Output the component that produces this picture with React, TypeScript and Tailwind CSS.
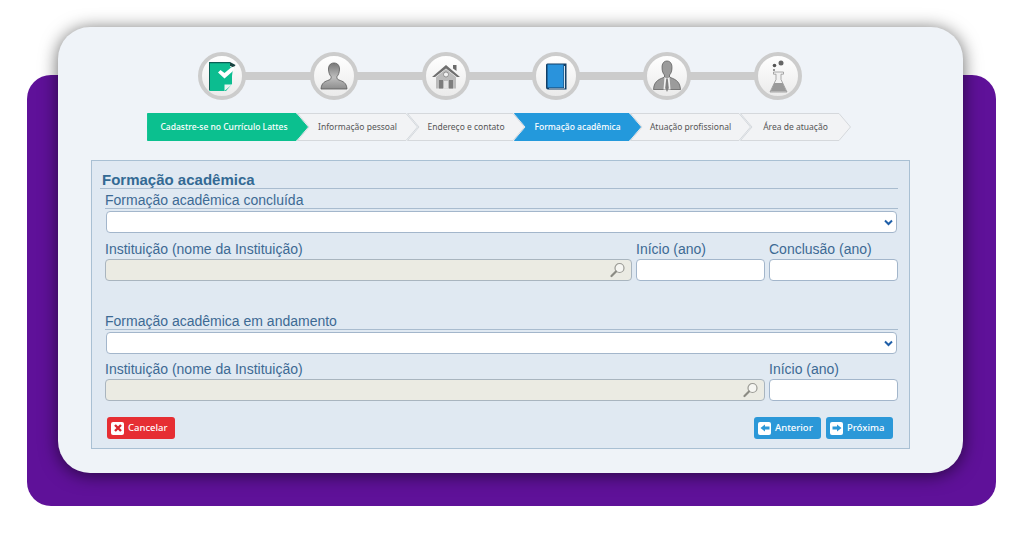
import { ReactNode } from 'react'

function DocIcon() {
  return (
    <svg width="29" height="31" viewBox="0 0 29 31">
      <path d="M1 2a1 1 0 0 1 1-1h20v5l3 1-1 8v8l-6 7H2a1 1 0 0 1-1-1z" fill="#0cbd90" />
      <path d="M1 1h21v1.200H2V29H1z" fill="#0a5f55" />
      <path d="M22 1v4l4 1.500 1.500-2.500z" fill="#16433f" />
      <path d="M10 11.500l2.500-2.500 4 3 6-5 4.500-2-2.500 5.500-8 7z" fill="#fff" />
      <path d="M16.500 30v-6.500H24z" fill="#eef3f1" />
    </svg>
  )
}

function PersonIcon() {
  return (
    <svg width="28" height="28" viewBox="0 0 28 28">
      <defs>
        <linearGradient id="pg" x1="0" y1="0" x2="0" y2="1">
          <stop offset="0" stopColor="#777" />
          <stop offset="0.55" stopColor="#bdbdbd" />
          <stop offset="1" stopColor="#8d8d8d" />
        </linearGradient>
      </defs>
      <path d="M14 1c4 0 5.500 3 5.500 6 0 3-1 6-2.500 7.500-.5 2 .5 3 2 3.500 4 1.500 7.500 2.500 8 9H1c.5-6.500 4-7.500 8-9 1.500-.5 2.500-1.500 2-3.500C9.500 13 8.500 10 8.500 7c0-3 1.500-6 5.500-6z" fill="url(#pg)" stroke="#5a5a5a" strokeWidth=".8" />
    </svg>
  )
}

function HouseIcon() {
  return (
    <svg width="28" height="25" viewBox="0 0 28 25">
      <path d="M21 1h3.500v6L21 4.500z" fill="#6a6a6a" />
      <path d="M14 1L0 13h3l11-8.500L25 13h3z" fill="#6f6f6f" />
      <path d="M4 13L14 5l10 8v11.500H4z" fill="#bcbcbc" />
      <circle cx="14" cy="10.500" r="2.500" fill="#f2f2f2" stroke="#777" strokeWidth=".7" />
      <path d="M7 16h4v8.500H7zM17 16h4v8.500h-4z" fill="#7d7d7d" />
      <path d="M12 17h4v7.500h-4z" fill="#e4e4e4" />
    </svg>
  )
}

function BookIcon() {
  return (
    <svg width="21" height="27" viewBox="0 0 21 27">
      <path d="M0 2a1.500 1.500 0 0 1 1.500-1.500H20.500V26.500H2a2 2 0 0 1-2-2z" fill="#123f66" />
      <path d="M1.500 1.500H17.500V24.500H1.500z" fill="#2a93dc" />
      <path d="M18 3h1v22.500H3V25h15z" fill="#d8e6f0" />
    </svg>
  )
}

function ManTieIcon() {
  return (
    <svg width="28" height="33" viewBox="0 0 28 33">
      <path d="M14 1c3.500 0 5 3 5 6.500S18 13.500 16.500 15v2c4 2 10.500 3 11 12.500h-27C1 20 7.500 19 11.500 17v-2C10 13.500 9 11 9 7.500S10.500 1 14 1z" fill="#9b9b9b" stroke="#555" strokeWidth=".7" />
      <path d="M11.500 17l2.500 2 2.500-2 1 12.500h-7z" fill="#f0f0f0" />
      <path d="M13.200 19h1.600l1 9-1.800 4-1.800-4z" fill="#808080" />
    </svg>
  )
}

function FlaskIcon() {
  return (
    <svg width="19" height="33" viewBox="0 0 19 33">
      <circle cx="12" cy="3" r="2.500" fill="#666" />
      <circle cx="5.500" cy="5.500" r="1.800" fill="#555" />
      <circle cx="5" cy="10" r="1" fill="#777" />
      <path d="M4.500 12h10v2.200h-2.500v5.300l6 12.500H1l6-12.500v-5.300H4.500z" fill="#f1f1f1" stroke="#8a8a8a" strokeWidth=".7" />
      <path d="M5.300 23h8.400l3.800 8.500h-16z" fill="#9a9a9a" />
    </svg>
  )
}

function Circle({ children }: { children: ReactNode }) {
  return (
    <div className="relative z-10 flex h-[48px] w-[48px] shrink-0 items-center justify-center rounded-full border-[4px] border-[#cccccc] bg-gradient-to-b from-[#ffffff] to-[#ebebeb]">
      {children}
    </div>
  )
}

function Bar({ width }: { width: string }) {
  return <div className={`-mx-[1px] h-[8px] bg-[#cccccc] ${width}`} />
}

const STEPS = [
  { label: 'Cadastre-se no Currículo Lattes', width: 161, fill: '#0bc08f', first: true },
  { label: 'Informação pessoal', width: 121, fill: '' },
  { label: 'Endereço e contato', width: 118, fill: '' },
  { label: 'Formação acadêmica', width: 127, fill: '#2399dc' },
  { label: 'Atuação profissional', width: 121, fill: '' },
  { label: 'Área de atuação', width: 111, fill: '' },
]

function Step({ label, width, fill, first }: { label: string; width: number; fill: string; first?: boolean }) {
  const h = 28
  const tip = 12
  const notch = first ? 0 : tip
  const points = `0.5,0.5 ${width - tip},0.5 ${width - 0.5},${h / 2} ${width - tip},${h - 0.5} 0.5,${h - 0.5} ${notch},${h / 2}`
  return (
    <div
      className={`relative flex h-[28px] shrink-0 items-center justify-center ${first ? 'pr-[7px]' : '-ml-[11px] px-[12px]'} ${fill ? 'z-10' : ''}`}
      style={{ width }}
    >
      <svg className="absolute inset-0" width={width} height={h}>
        <polygon
          points={points}
          fill={fill || '#f2f3f5'}
          stroke={fill || '#d5d8dc'}
          strokeWidth="1"
        />
      </svg>
      <span className={`relative whitespace-nowrap text-[8.5px] ${fill ? 'font-medium text-white' : 'text-[#555]'}`}>{label}</span>
    </div>
  )
}

function Chevron() {
  return (
    <svg className="pointer-events-none absolute right-[4px] top-[8px]" width="9" height="7" viewBox="0 0 9 7">
      <path d="M1 1.500l3.500 3.500 3.500-3.500" fill="none" stroke="#1f5fa8" strokeWidth="2" />
    </svg>
  )
}

function Lens() {
  return (
    <svg className="absolute right-[6px] top-[3px]" width="16" height="16" viewBox="0 0 16 16">
      <circle cx="9.500" cy="6" r="4.500" fill="#f6f6f2" stroke="#9a9a94" strokeWidth="1.200" />
      <path d="M6 9.500L1.500 14" stroke="#8b8b83" strokeWidth="2.200" strokeLinecap="round" />
    </svg>
  )
}

function Label({ children }: { children: ReactNode }) {
  return <label className="block h-[18px] text-[14px] leading-[16px] text-[#3d6a94]">{children}</label>
}

function SectionLabel({ children }: { children: ReactNode }) {
  return (
    <div className="border-b border-[#a9bccf] pb-[1px]">
      <label className="block h-[18px] text-[14px] leading-[22px] text-[#3d6a94]">{children}</label>
    </div>
  )
}

function SelectBox() {
  return (
    <div className="relative ml-[1px] mr-[1px] mt-[2px]">
      <select className="block h-[22px] w-full appearance-none rounded-[4px] border border-[#a3b6cb] bg-white" />
      <Chevron />
    </div>
  )
}

function TextBox() {
  return <input className="block h-[22px] w-full rounded-[4px] border border-[#a3b6cb] bg-white" />
}

function LookupBox() {
  return (
    <div className="relative">
      <input readOnly className="block h-[22px] w-full rounded-[4px] border border-[#a9b5bf] bg-[#ebebe3]" />
      <Lens />
    </div>
  )
}

function ActionButton({ color, width, label, icon }: { color: string; width: string; label: string; icon: ReactNode }) {
  return (
    <button className={`flex h-[22px] items-center gap-[4px] rounded-[3px] pl-[4px] text-[9.5px] font-medium text-white [font-family:"Noto_Sans",sans-serif] ${color} ${width}`}>
      <span className="flex h-[13px] w-[13px] items-center justify-center rounded-[2px] bg-white">{icon}</span>
      {label}
    </button>
  )
}

export default function App() {
  return (
    <div className='relative h-[536px] w-[1024px] overflow-hidden bg-white pt-[27px] pl-[58px] [font-family:"Noto_Sans",sans-serif]'>
      {/* purple block behind the card */}
      <div className="absolute left-[27px] top-[75px] h-[431px] w-[969px] rounded-[24px] bg-[#5f1199]" />

      <div className="relative h-[446px] w-[905px] rounded-[32px] bg-[#eff3f8] pt-[25px] shadow-[0_2px_18px_rgba(0,0,0,0.6)]">
        {/* stepper icons */}
        <div className="ml-[140px] flex items-center">
          <Circle><DocIcon /></Circle>
          <Bar width="w-[66px]" />
          <Circle><PersonIcon /></Circle>
          <Bar width="w-[66px]" />
          <Circle><HouseIcon /></Circle>
          <Bar width="w-[64px]" />
          <Circle><BookIcon /></Circle>
          <Bar width="w-[65px]" />
          <Circle><ManTieIcon /></Circle>
          <Bar width="w-[65px]" />
          <Circle><FlaskIcon /></Circle>
        </div>

        {/* breadcrumb */}
        <div className="ml-[89px] mt-[13px] flex">
          {STEPS.map(s => (
            <Step key={s.label} {...s} />
          ))}
        </div>

        {/* form panel */}
        <div className='ml-[33px] mt-[19px] h-[289px] w-[819px] border border-[#a9c0d3] bg-[#e0e9f2] pl-[8px] pr-[11px] [font-family:"Liberation_Sans",sans-serif]'>
          <h2 className="mt-[10px] h-[18px] border-b border-[#a9bccf] pl-[2px] text-[15px] font-bold leading-[18px] text-[#336a94]">
            Formação acadêmica
          </h2>
          <div className="pl-[5px]">
            <SectionLabel>Formação acadêmica concluída</SectionLabel>
            <SelectBox />

            <div className="mt-[8px] grid grid-cols-[527px_129px_129px] gap-x-[4px]">
              <Label>Instituição (nome da Instituição)</Label>
              <Label>Início (ano)</Label>
              <Label>Conclusão (ano)</Label>
              <LookupBox />
              <TextBox />
              <TextBox />
            </div>

            <div className="mt-[29px]">
              <SectionLabel>Formação acadêmica em andamento</SectionLabel>
            </div>
            <SelectBox />

            <div className="mt-[7px] grid grid-cols-[660px_129px] gap-x-[4px]">
              <Label>Instituição (nome da Instituição)</Label>
              <Label>Início (ano)</Label>
              <LookupBox />
              <TextBox />
            </div>

            <div className="mt-[16px] flex items-center pl-[2px] pr-[5px]">
              <ActionButton
                color="bg-[#e62e33]"
                width="w-[68px]"
                label="Cancelar"
                icon={
                  <svg width="10" height="10" viewBox="0 0 10 10">
                    <path d="M2 2l6 6M8 2l-6 6" stroke="#d9272e" strokeWidth="2.400" />
                  </svg>
                }
              />
              <div className="flex-1" />
              <ActionButton
                color="bg-[#2b98d8]"
                width="w-[67px]"
                label="Anterior"
                icon={
                  <svg width="10" height="10" viewBox="0 0 10 10">
                    <path d="M0.500 5L5 1.500v2h4.500v3H5v2z" fill="#2b98d8" />
                  </svg>
                }
              />
              <div className="w-[5px]" />
              <ActionButton
                color="bg-[#2b98d8]"
                width="w-[67px]"
                label="Próxima"
                icon={
                  <svg width="10" height="10" viewBox="0 0 10 10">
                    <path d="M9.500 5L5 1.500v2H.5v3H5v2z" fill="#2b98d8" />
                  </svg>
                }
              />
            </div>
          </div>
        </div>
      </div>
    </div>
  )
}
